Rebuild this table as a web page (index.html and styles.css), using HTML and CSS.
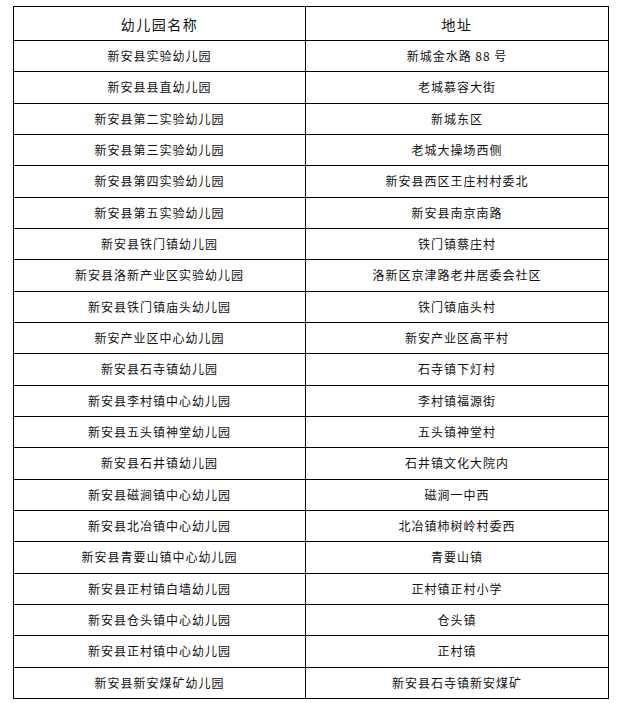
FILE: index.html
```html
<!DOCTYPE html>
<html lang="zh">
<head>
<meta charset="utf-8">
<link rel="stylesheet" href="styles.css">
</head>
<body>
<table class="list">
  <thead>
    <tr><th>幼儿园名称</th><th>地址</th></tr>
  </thead>
  <tbody>
    <tr><td>新安县实验幼儿园</td><td>新城金水路 88 号</td></tr>
    <tr><td>新安县县直幼儿园</td><td>老城慕容大街</td></tr>
    <tr><td>新安县第二实验幼儿园</td><td>新城东区</td></tr>
    <tr><td>新安县第三实验幼儿园</td><td>老城大操场西侧</td></tr>
    <tr><td>新安县第四实验幼儿园</td><td>新安县西区王庄村村委北</td></tr>
    <tr><td>新安县第五实验幼儿园</td><td>新安县南京南路</td></tr>
    <tr><td>新安县铁门镇幼儿园</td><td>铁门镇蔡庄村</td></tr>
    <tr><td>新安县洛新产业区实验幼儿园</td><td>洛新区京津路老井居委会社区</td></tr>
    <tr><td>新安县铁门镇庙头幼儿园</td><td>铁门镇庙头村</td></tr>
    <tr><td>新安产业区中心幼儿园</td><td>新安产业区高平村</td></tr>
    <tr><td>新安县石寺镇幼儿园</td><td>石寺镇下灯村</td></tr>
    <tr><td>新安县李村镇中心幼儿园</td><td>李村镇福源街</td></tr>
    <tr><td>新安县五头镇神堂幼儿园</td><td>五头镇神堂村</td></tr>
    <tr><td>新安县石井镇幼儿园</td><td>石井镇文化大院内</td></tr>
    <tr><td>新安县磁涧镇中心幼儿园</td><td>磁涧一中西</td></tr>
    <tr><td>新安县北冶镇中心幼儿园</td><td>北冶镇柿树岭村委西</td></tr>
    <tr><td>新安县青要山镇中心幼儿园</td><td>青要山镇</td></tr>
    <tr><td>新安县正村镇白墙幼儿园</td><td>正村镇正村小学</td></tr>
    <tr><td>新安县仓头镇中心幼儿园</td><td>仓头镇</td></tr>
    <tr><td>新安县正村镇中心幼儿园</td><td>正村镇</td></tr>
    <tr><td>新安县新安煤矿幼儿园</td><td>新安县石寺镇新安煤矿</td></tr>
  </tbody>
</table>
</body>
</html>
```
FILE: styles.css
```css
html, body {
  margin: 0;
  padding: 0;
  background: #fff;
}
body {
  padding: 6px 0 0 13px;
  font-family: "Noto Sans CJK SC", "Liberation Sans", sans-serif;
  color: #111;
}
.list {
  border-collapse: collapse;
  table-layout: fixed;
  width: 596px;
}
.list th, .list td {
  border: 1px solid #000;
  padding: 0;
  text-align: center;
  vertical-align: middle;
  white-space: nowrap;
}
.list th:first-child, .list td:first-child {
  width: 291px;
}
.list th {
  height: 33px;
  font-weight: normal;
  font-size: 14px;
  letter-spacing: 1.5px;
  line-height: 1;
}
.list td {
  height: 30.33px;
  font-size: 12px;
  letter-spacing: 1px;
  line-height: 1;
}
```
